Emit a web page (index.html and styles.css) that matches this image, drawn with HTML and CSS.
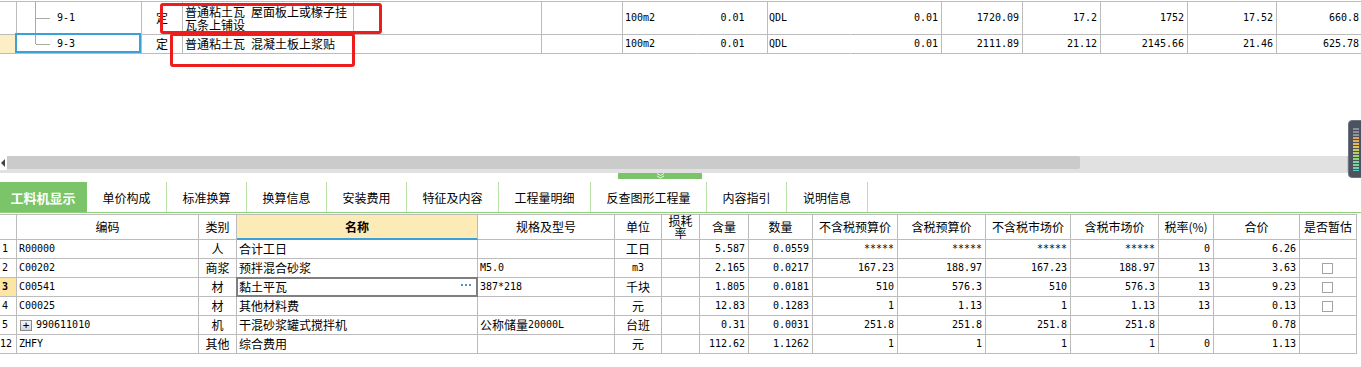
FILE: index.html
```html
<!DOCTYPE html>
<html lang="zh-CN">
<head>
    <meta charset="UTF-8">
    <title>工料机显示</title>
    <link rel="stylesheet" href="styles.css">
</head>
<body>
<div class="page">

    <div class="top-pane">
        <div class="grid-top">
            <div class="trow r1">
                <div class="c"></div>
                <div class="c code tree-a"><span class="mono">9-1</span></div>
                <div class="c m">定</div>
                <div class="c l two">普通粘土瓦<span class="sp"></span>屋面板上或椽子挂<br>瓦条上铺设</div>
                <div class="c"></div>
                <div class="c"></div>
                <div class="c l nb mono">100m2</div>
                <div class="c m mono">0.01</div>
                <div class="c l1 nb mono">QDL</div>
                <div class="c r mono">0.01</div>
                <div class="c r mono">1720.09</div>
                <div class="c r mono">17.2</div>
                <div class="c r mono">1752</div>
                <div class="c r mono">17.52</div>
                <div class="c r mono">660.8</div>
            </div>
            <div class="trow r2">
                <div class="c ind-soft"></div>
                <div class="c code tree-b"><span class="mono">9-3</span><span class="cursor"></span></div>
                <div class="c m">定</div>
                <div class="c l">普通粘土瓦<span class="sp"></span>混凝土板上浆贴</div>
                <div class="c"></div>
                <div class="c"></div>
                <div class="c l nb mono">100m2</div>
                <div class="c m mono">0.01</div>
                <div class="c l1 nb mono">QDL</div>
                <div class="c r mono">0.01</div>
                <div class="c r mono">2111.89</div>
                <div class="c r mono">21.12</div>
                <div class="c r mono">2145.66</div>
                <div class="c r mono">21.46</div>
                <div class="c r mono">625.78</div>
            </div>
        </div>
    </div>

    <div class="hscroll">
        <div class="sb-left"><span class="tri"></span></div>
        <div class="thumb"></div>
        <div class="sb-right"></div>
    </div>

    <div class="splitter">
        <div class="handle">
            <svg width="9" height="6" viewBox="0 0 9 6"><polyline points="1,0.5 4.5,2.5 8,0.5" fill="none" stroke="#e9f5e3" stroke-width="1"/><polyline points="1,3 4.5,5 8,3" fill="none" stroke="#e9f5e3" stroke-width="1"/></svg>
        </div>
    </div>

    <div class="tabs">
        <div class="tab active">工料机显示</div>
        <div class="tab">单价构成</div>
        <div class="tab">标准换算</div>
        <div class="tab">换算信息</div>
        <div class="tab">安装费用</div>
        <div class="tab">特征及内容</div>
        <div class="tab">工程量明细</div>
        <div class="tab">反查图形工程量</div>
        <div class="tab">内容指引</div>
        <div class="tab">说明信息</div>
    </div>

    <div class="grid-bot">
        <div class="brow head">
            <div class="c"></div>
            <div class="c m">编码</div>
            <div class="c m">类别</div>
            <div class="c m hl">名称</div>
            <div class="c m">规格及型号</div>
            <div class="c m">单位</div>
            <div class="c m stack"><span>损耗</span><span>率</span></div>
            <div class="c m">含量</div>
            <div class="c m">数量</div>
            <div class="c m">不含税预算价</div>
            <div class="c m">含税预算价</div>
            <div class="c m">不含税市场价</div>
            <div class="c m">含税市场价</div>
            <div class="c m">税率(%)</div>
            <div class="c m">合价</div>
            <div class="c m">是否暂估</div>
        </div>

        <div class="brow">
            <div class="c no mono">1</div>
            <div class="c l mono">R00000</div>
            <div class="c m">人</div>
            <div class="c l">合计工日</div>
            <div class="c l"></div>
            <div class="c m">工日</div>
            <div class="c"></div>
            <div class="c r mono">5.587</div>
            <div class="c r mono">0.0559</div>
            <div class="c r mono">*****</div>
            <div class="c r mono">*****</div>
            <div class="c r mono">*****</div>
            <div class="c r mono">*****</div>
            <div class="c r mono">0</div>
            <div class="c r mono">6.26</div>
            <div class="c"></div>
        </div>

        <div class="brow">
            <div class="c no mono">2</div>
            <div class="c l mono">C00202</div>
            <div class="c m">商浆</div>
            <div class="c l">预拌混合砂浆</div>
            <div class="c l mono">M5.0</div>
            <div class="c m mono">m3</div>
            <div class="c"></div>
            <div class="c r mono">2.165</div>
            <div class="c r mono">0.0217</div>
            <div class="c r mono">167.23</div>
            <div class="c r mono">188.97</div>
            <div class="c r mono">167.23</div>
            <div class="c r mono">188.97</div>
            <div class="c r mono">13</div>
            <div class="c r mono">3.63</div>
            <div class="c m"><span class="check"></span></div>
        </div>

        <div class="brow">
            <div class="c no mono ind">3</div>
            <div class="c l mono focus-left">C00541</div>
            <div class="c m">材</div>
            <div class="c l sel">黏土平瓦<svg class="more" width="10" height="3" viewBox="0 0 10 3"><rect x="0" y="0" width="2" height="2" fill="#4a8fd8"/><rect x="4" y="0" width="2" height="2" fill="#4a8fd8"/><rect x="8" y="0" width="2" height="2" fill="#4a8fd8"/></svg></div>
            <div class="c l mono">387*218</div>
            <div class="c m">千块</div>
            <div class="c"></div>
            <div class="c r mono">1.805</div>
            <div class="c r mono">0.0181</div>
            <div class="c r mono">510</div>
            <div class="c r mono">576.3</div>
            <div class="c r mono">510</div>
            <div class="c r mono">576.3</div>
            <div class="c r mono">13</div>
            <div class="c r mono">9.23</div>
            <div class="c m"><span class="check"></span></div>
        </div>

        <div class="brow">
            <div class="c no mono">4</div>
            <div class="c l mono">C00025</div>
            <div class="c m">材</div>
            <div class="c l">其他材料费</div>
            <div class="c l"></div>
            <div class="c m">元</div>
            <div class="c"></div>
            <div class="c r mono">12.83</div>
            <div class="c r mono">0.1283</div>
            <div class="c r mono">1</div>
            <div class="c r mono">1.13</div>
            <div class="c r mono">1</div>
            <div class="c r mono">1.13</div>
            <div class="c r mono">13</div>
            <div class="c r mono">0.13</div>
            <div class="c m"><span class="check"></span></div>
        </div>

        <div class="brow">
            <div class="c no mono">5</div>
            <div class="c l mono"><span class="expand">+</span>990611010</div>
            <div class="c m">机</div>
            <div class="c l">干混砂浆罐式搅拌机</div>
            <div class="c l">公称储量<span class="mono">20000L</span></div>
            <div class="c m">台班</div>
            <div class="c"></div>
            <div class="c r mono">0.31</div>
            <div class="c r mono">0.0031</div>
            <div class="c r mono">251.8</div>
            <div class="c r mono">251.8</div>
            <div class="c r mono">251.8</div>
            <div class="c r mono">251.8</div>
            <div class="c r mono"></div>
            <div class="c r mono">0.78</div>
            <div class="c"></div>
        </div>

        <div class="brow">
            <div class="c no no2 mono">12</div>
            <div class="c l mono">ZHFY</div>
            <div class="c m">其他</div>
            <div class="c l">综合费用</div>
            <div class="c l"></div>
            <div class="c m">元</div>
            <div class="c"></div>
            <div class="c r mono">112.62</div>
            <div class="c r mono">1.1262</div>
            <div class="c r mono">1</div>
            <div class="c r mono">1</div>
            <div class="c r mono">1</div>
            <div class="c r mono">1</div>
            <div class="c r mono">0</div>
            <div class="c r mono">1.13</div>
            <div class="c"></div>
        </div>
    </div>

    <!-- red annotation boxes drawn over the upper grid -->
    <div class="mark mark-1"></div>
    <div class="mark mark-2"></div>

    <!-- docked side widget, partly off screen -->
    <div class="dock"><div class="dock-bars"></div></div>
</div>
</body>
</html>
```

FILE: styles.css
```css
body {
    margin: 0;
    font-family: "Noto Sans CJK SC", "Noto Sans", sans-serif;
    font-size: 12px;
    color: #000;
    background: #fff;
    overflow: hidden;
}
.page {
    position: relative;
    width: 1361px;
    height: 367px;
    overflow: hidden;
}
.mono {
    font-family: "DejaVu Sans Mono", "Liberation Mono", monospace;
    font-size: 10px;
}
.sp {
    display: inline-block;
    width: 6px;
}

/* shared cells */
.c {
    box-sizing: border-box;
    border-right: 1px solid #bcbcbc;
    border-bottom: 1px solid #bcbcbc;
    display: flex;
    align-items: center;
    white-space: nowrap;
    overflow: hidden;
    line-height: 18px;
}
.c.l { padding-left: 2px; }
.c.l1 { padding-left: 1px; }
.c.m { justify-content: center; }
.c.r { justify-content: flex-end; padding-right: 3px; }
.c.nb { border-right-color: transparent; }

/* upper grid */
.top-pane {
    height: 155px;
}
.grid-top {
    margin-top: 1px;
    border-top: 1px solid #bcbcbc;
    width: 1363px;
}
.trow {
    display: grid;
    grid-template-columns: 17px 125px 41px 171px 188px 81px 75px 70px 83px 91px 81px 78px 87px 89px 86px;
}
.trow.r1 { height: 33px; }
.trow.r2 { height: 19px; }
.c.two {
    display: block;
    white-space: normal;
    line-height: 13px;
    padding-top: 3px;
}
.ind-soft { background: #fcefc6; }
.code {
    position: relative;
    padding-left: 40px;
    overflow: visible;
}
.tree-a::before,
.tree-b::before {
    content: "";
    position: absolute;
    left: 18px;
    top: 0;
    border-left: 1px solid #a9a9a9;
}
.tree-a::before { bottom: 0; }
.tree-b::before { height: 9px; }
.tree-a::after,
.tree-b::after {
    content: "";
    position: absolute;
    left: 19px;
    width: 14px;
    border-top: 1px solid #a9a9a9;
}
.tree-a::after { top: 16px; }
.tree-b::after { top: 9px; }
.cursor {
    position: absolute;
    left: -2px;
    top: -2px;
    right: 0;
    bottom: 0;
    border: 2px solid #3ba0d8;
}

/* horizontal scrollbar */
.hscroll {
    height: 17px;
    background: #e1e1e1;
    display: flex;
}
.sb-left {
    width: 7px;
    height: 14px;
    background: #fff;
    display: flex;
    align-items: center;
}
.tri {
    width: 0;
    height: 0;
    margin-left: 1px;
    border-top: 4px solid transparent;
    border-bottom: 4px solid transparent;
    border-right: 4px solid #444;
}
.thumb {
    width: 1073px;
    height: 13px;
    background: #cbcbcb;
    border-radius: 0 2px 2px 0;
}
.sb-right {
    margin-left: auto;
    width: 12px;
    height: 14px;
    background: #fff;
    border: 1px solid #c8c8c8;
}

/* splitter */
.splitter {
    height: 9px;
    padding-left: 618px;
}
.handle {
    width: 84px;
    height: 6px;
    background: #7cc46a;
    display: flex;
    justify-content: center;
}

/* tabs */
.tabs {
    display: grid;
    grid-template-columns: 87px 80px 80px 80px 80px 92px 92px 116px 80px 81px;
    height: 31px;
    box-sizing: border-box;
    border-bottom: 1px solid #8fcf7c;
}
.tab {
    box-sizing: border-box;
    border-right: 1px solid #b9e3a6;
    display: flex;
    align-items: center;
    justify-content: center;
    font-size: 12px;
}
.tab.active {
    background: #7cc46a;
    border-right-color: #7cc46a;
    color: #fff;
    font-size: 13px;
    font-weight: bold;
}

/* lower grid */
.grid-bot {
    margin-top: 1px;
    border-top: 1px solid #bcbcbc;
    width: 1357px;
}
.brow {
    display: grid;
    grid-template-columns: 17px 182px 38px 241px 137px 47px 38px 49px 64px 85px 88px 85px 88px 55px 86px 57px;
    height: 19px;
}
.brow.head { height: 25px; }
.head .c { line-height: 14px; }
.head .hl {
    background: #fdebb7;
    font-weight: bold;
    border-bottom: 2px solid #3ba0d8;
}
.head .stack {
    flex-direction: column;
    justify-content: flex-start;
    overflow: visible;
    line-height: 12px;
    font-size: 12px;
}
.stack span {
    display: block;
    height: 12px;
    line-height: 12px;
}
.c.no { padding-left: 2px; }
.c.no2 { padding-left: 0; }
.c.ind {
    background: #fde6a4;
    font-weight: bold;
}
.focus-left { position: relative; }
.focus-left::before {
    content: "";
    position: absolute;
    left: -2px;
    top: 0;
    bottom: -1px;
    width: 2px;
    background: #3ba0d8;
}
.sel {
    position: relative;
    overflow: visible;
}
.sel::after {
    content: "";
    position: absolute;
    left: -1px;
    top: -1px;
    right: -1px;
    bottom: -1px;
    border: 2px solid #7f7f7f;
}
.more {
    margin-left: auto;
    margin-right: 6px;
    margin-bottom: 4px;
}
.check {
    width: 11px;
    height: 11px;
    box-sizing: border-box;
    border: 1px solid #a3a3a3;
    background: #fff;
    margin-left: -1px;
}
.expand {
    width: 12px;
    height: 11px;
    box-sizing: border-box;
    border: 1px solid #8a8a8a;
    background: linear-gradient(#f4f4f4, #d6d6d6);
    display: inline-flex;
    align-items: center;
    justify-content: center;
    font-size: 11px;
    line-height: 9px;
    margin: 0 4px 0 1px;
}

/* annotations */
.mark {
    position: absolute;
    box-sizing: border-box;
    border: 3px solid #ee1d1d;
    border-radius: 3px;
}
.mark-1 {
    left: 160px;
    top: 3px;
    width: 222px;
    height: 31px;
}
.mark-2 {
    left: 170px;
    top: 33px;
    width: 185px;
    height: 34px;
}

.dock {
    position: absolute;
    left: 1348px;
    top: 120px;
    width: 18px;
    height: 58px;
    box-sizing: border-box;
    background: #4d5261;
    border: 1px solid #6f7483;
    border-radius: 4px 0 0 4px;
}
.dock-bars {
    position: absolute;
    left: 4px;
    top: 6px;
    width: 6px;
    height: 44px;
    background:
        repeating-linear-gradient(#4d5261 0 1px, transparent 1px 3px),
        linear-gradient(#8a8e99 0%, #8a8e99 18%, #e8985a 22%, #e6c35c 45%, #9fd26e 65%, #5fd3c4 100%);
}
```
